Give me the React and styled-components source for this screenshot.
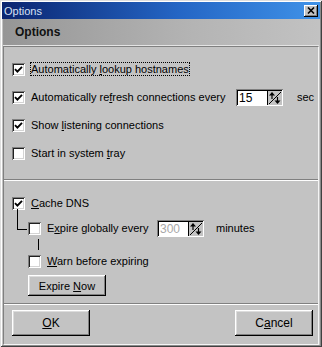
import React from "react";
import styled, { createGlobalStyle } from "styled-components";

const GlobalStyle = createGlobalStyle`
  html, body { margin: 0; padding: 0; background: #c3c3c3; }
  body { font-family: "Liberation Sans", Arial, sans-serif; font-size: 11px; color: #000; }
`;

const Window = styled.div`
  width: 322px;
  height: 347px;
  box-sizing: border-box;
  padding: 2px 3px;
  background: #c3c3c3;
  box-shadow: inset 1px 1px 0 #dedede, inset -1px -1px 0 #404040, inset 2px 2px 0 #fff, inset -2px -2px 0 #8a8a8a;
  display: flex;
  flex-direction: column;
`;

const TitleBar = styled.div`
  height: 17px;
  margin: 0 -1px;
  padding: 0 2px 0 2px;
  background: linear-gradient(to right, #0b2570, #2465c4 55%, #3f92e8);
  color: #d8e2f6;
  font-size: 11px;
  display: flex;
  align-items: center;
  justify-content: space-between;
`;

const CloseButton = styled.div`
  width: 14px;
  height: 12px;
  background: #c3c3c3;
  box-shadow: inset -1px -1px 0 #000, inset 1px 1px 0 #fff, inset -2px -2px 0 #808080;
  display: flex;
  align-items: center;
  justify-content: center;
`;

const Header = styled.div`
  height: 26px;
  padding-left: 12px;
  background: linear-gradient(to right, #969696, #b4b4b4 60%, #c2c2c2);
  border-bottom: 1px solid #e4e4e4;
  font-size: 12px;
  font-weight: bold;
  color: #111;
  display: flex;
  align-items: center;
`;

const Panel = styled.div`
  flex: 1;
  border: 1px solid;
  border-color: #808080 #f4f4f4 #f4f4f4 #808080;
  padding-top: 8px;
  display: flex;
  flex-direction: column;
`;

const Row = styled.div`
  height: ${(p) => p.$h}px;
  padding-left: ${(p) => p.$indent}px;
  display: flex;
  align-items: center;
`;

const Box = styled.span`
  width: 13px;
  height: 13px;
  flex: none;
  box-sizing: border-box;
  background: #fff;
  box-shadow: inset 1px 1px 0 #808080, inset -1px -1px 0 #fff, inset 2px 2px 0 #202020, inset -2px -2px 0 #d4d4d4;
  display: flex;
  align-items: center;
  justify-content: center;
`;

const Label = styled.span`
  margin-left: 5px;
  width: ${(p) => (p.$w ? `${p.$w}px` : "auto")};
  flex: none;
  padding: 1px 1px;
  outline: ${(p) => (p.$focus ? "1px dotted #000" : "none")};
  outline-offset: -1px;
  white-space: nowrap;
`;

const U = styled.span`
  text-decoration: underline;
`;

const Unit = styled.span`
  margin-left: ${(p) => p.$gap}px;
`;

const Spin = styled.div`
  width: 47px;
  height: 17px;
  box-sizing: border-box;
  padding: 2px 1px 1px 2px;
  background: #fff;
  box-shadow: inset 1px 1px 0 #808080, inset -1px -1px 0 #fff, inset 2px 2px 0 #000;
  display: flex;
  flex: none;
`;

const SpinEdit = styled.div`
  flex: 1;
  padding-left: 1px;
  color: ${(p) => (p.$disabled ? "#a8a8a8" : "#000")};
  font-size: 12px;
  line-height: 14px;
`;

const SpinButton = styled.div`
  width: 15px;
  height: 14px;
  background: #c3c3c3;
  box-shadow: inset 1px 0 0 #000;
  display: flex;
`;

const Elbow = styled.span`
  width: 10px;
  height: 21px;
  align-self: flex-start;
  margin-top: -8px;
  margin-right: 1px;
  border-left: 1px solid #000;
  border-bottom: 1px solid #000;
  box-sizing: border-box;
  flex: none;
`;

const VLine = styled.div`
  height: 11px;
  margin-left: 34px;
  width: 1px;
  background: #000;
`;

const Separator = styled.div`
  border-top: 1px solid #808080;
  border-bottom: 1px solid #fdfdfd;
  margin: ${(p) => p.$m};
`;

const Button = styled.button`
  width: 78px;
  height: ${(p) => p.$h}px;
  margin-left: ${(p) => p.$ml || 0}px;
  padding: 0;
  border: none;
  background: #c3c3c3;
  box-shadow: inset -1px -1px 0 #000, inset 1px 1px 0 #fff, inset -2px -2px 0 #808080, inset 2px 2px 0 #dcdcdc;
  font-family: "Liberation Sans", Arial, sans-serif;
  font-size: ${(p) => p.$fs || 11}px;
  color: #000;
  flex: none;
`;

const ButtonBar = styled.div`
  margin-top: 5px;
  padding: 0 5px 0 8px;
  display: flex;
  justify-content: space-between;
`;

const Check = () => (
  <svg width="9" height="9" viewBox="0 0 9 9">
    <path d="M1 4.2 L3.4 6.6 L8 1.8" fill="none" stroke="#000" strokeWidth="1.9" />
  </svg>
);

const CheckBox = ({ checked }) => <Box>{checked && <Check />}</Box>;

const SpinArrows = () => (
  <svg width="15" height="14" viewBox="0 0 15 14">
    <line x1="2" y1="13" x2="14" y2="1" stroke="#000" strokeWidth="1" />
    <path d="M5 1 L2 4.5 L8 4.5 Z" fill="#000" />
    <line x1="5" y1="4" x2="5" y2="8" stroke="#000" strokeWidth="1.2" />
    <path d="M10.5 13 L7.5 9.5 L13.5 9.5 Z" fill="#000" />
    <line x1="10.5" y1="6" x2="10.5" y2="10" stroke="#000" strokeWidth="1.2" />
  </svg>
);

const SpinBox = ({ value, disabled }) => (
  <Spin>
    <SpinEdit $disabled={disabled}>{value}</SpinEdit>
    <SpinButton>
      <SpinArrows />
    </SpinButton>
  </Spin>
);

export default function App() {
  return (
    <>
      <GlobalStyle />
      <Window>
        <TitleBar>
          <span>Options</span>
          <CloseButton>
            <svg width="8" height="7" viewBox="0 0 8 7">
              <path d="M1 0.5 L7 6.5 M7 0.5 L1 6.5" stroke="#000" strokeWidth="1.6" />
            </svg>
          </CloseButton>
        </TitleBar>
        <Header>Options</Header>
        <Panel>
          <Row $h={28} $indent={8}>
            <CheckBox checked />
            <Label $focus>
              Automatically <U>l</U>ookup hostnames
            </Label>
          </Row>
          <Row $h={28} $indent={8}>
            <CheckBox checked />
            <Label $w={204}>
              Automatically re<U>f</U>resh connections every
            </Label>
            <SpinBox value="15" />
            <Unit $gap={14}>sec</Unit>
          </Row>
          <Row $h={28} $indent={8}>
            <CheckBox checked />
            <Label>
              Show <U>l</U>istening connections
            </Label>
          </Row>
          <Row $h={28} $indent={8}>
            <CheckBox />
            <Label>
              Start in system <U>t</U>ray
            </Label>
          </Row>
          <Separator $m="12px 0 8px" />
          <Row $h={28} $indent={8}>
            <CheckBox checked />
            <Label>
              <U>C</U>ache DNS
            </Label>
          </Row>
          <Row $h={22} $indent={13}>
            <Elbow />
            <CheckBox />
            <Label $w={109}>
              E<U>x</U>pire globally every
            </Label>
            <SpinBox value="300" disabled />
            <Unit $gap={12}>minutes</Unit>
          </Row>
          <VLine />
          <Row $h={22} $indent={24}>
            <CheckBox />
            <Label>
              <U>W</U>arn before expiring
            </Label>
          </Row>
          <Row $h={21} $indent={24} style={{ marginTop: 3 }}>
            <Button $h={21}>
              Expire <U>N</U>ow
            </Button>
          </Row>
          <Separator $m="7px 0 0" />
          <ButtonBar>
            <Button $h={26} $fs={12}>
              <U>O</U>K
            </Button>
            <Button $h={26} $fs={12}>
              C<U>a</U>ncel
            </Button>
          </ButtonBar>
        </Panel>
      </Window>
    </>
  );
}
